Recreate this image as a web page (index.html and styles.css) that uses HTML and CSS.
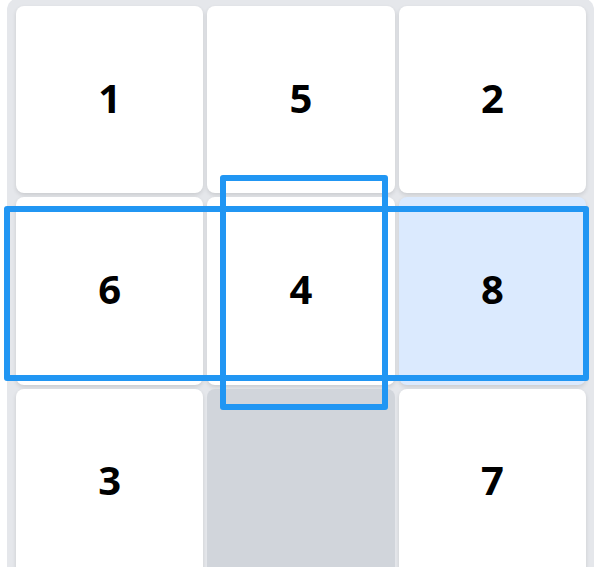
FILE: index.html
```html
<!DOCTYPE html>
<html lang="en">
<head>
    <meta charset="UTF-8">
    <meta name="viewport" content="width=device-width, initial-scale=1.0">
    <title>Sliding puzzle</title>
    <link rel="stylesheet" href="styles.css">
</head>
<body>
    <div class="board">
        <div class="grid">
            <div class="tile">1</div>
            <div class="tile">5</div>
            <div class="tile">2</div>
            <div class="tile">6</div>
            <div class="tile">4</div>
            <div class="tile selected">8</div>
            <div class="tile">3</div>
            <div class="tile empty"></div>
            <div class="tile">7</div>
        </div>
        <!-- row and column guides around the active tile -->
        <div class="guide guide-row"></div>
        <div class="guide guide-col"></div>
    </div>
</body>
</html>
```

FILE: styles.css
```css
body {
    margin: 0;
    padding: 0;
    background-color: white;
    font-family: "Noto Sans", "Open Sans", Arial, sans-serif;
    overflow: hidden;
}
.board {
    position: relative;
    width: 570px;
    margin: -2px 0 0 7px;
    padding: 8px 8px 8px 9px;
    background-color: #e5e7eb;
    border-radius: 12px;
}
.grid {
    display: grid;
    grid-template-columns: repeat(3, 1fr);
    grid-auto-rows: 187.33px;
    gap: 4px;
}
.tile {
    display: flex;
    justify-content: center;
    align-items: center;
    padding-bottom: 5px;
    box-sizing: border-box;
    background-color: white;
    border-radius: 8px;
    box-shadow: 0 2px 4px rgba(0, 0, 0, 0.12);
    font-size: 40px;
    font-weight: 700;
    color: black;
}
.tile.selected {
    background-color: #dbeafe;
}
.tile.empty {
    background-color: #d1d5db;
    box-shadow: none;
}
.guide {
    position: absolute;
    border: 6px solid #2196f3;
    border-radius: 3px;
    box-sizing: border-box;
}
.guide-row {
    left: -3px;
    top: 208px;
    width: 585px;
    height: 175px;
}
.guide-col {
    left: 212.5px;
    top: 177px;
    width: 168px;
    height: 235px;
}
```
